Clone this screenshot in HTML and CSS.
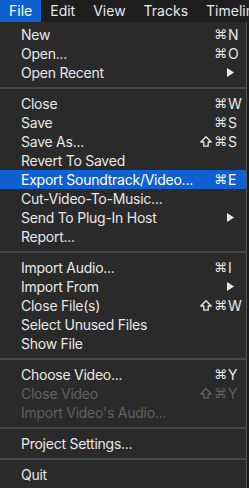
FILE: index.html
```html
<!DOCTYPE html>
<html lang="en">
<head>
  <meta charset="UTF-8">
  <title>File menu</title>
  <link rel="stylesheet" href="styles.css">
</head>
<body>

<div class="menubar">
  <span class="menu-title active">File</span>
  <span class="menu-title">Edit</span>
  <span class="menu-title">View</span>
  <span class="menu-title">Tracks</span>
  <span class="menu-title">Timeline</span>
</div>

<div class="menu">
  <div class="item"><span class="label">New</span><span class="mods">⌘</span><span class="key">N</span></div>
  <div class="item"><span class="label">Open...</span><span class="mods">⌘</span><span class="key">O</span></div>
  <div class="item"><span class="label">Open Recent</span><span class="key"><svg class="arrow" width="7" height="9"><polygon points="0,0 7,4.5 0,9"/></svg></span></div>

  <div class="sep"></div>

  <div class="item"><span class="label">Close</span><span class="mods">⌘</span><span class="key">W</span></div>
  <div class="item"><span class="label">Save</span><span class="mods">⌘</span><span class="key">S</span></div>
  <div class="item"><span class="label">Save As...</span><span class="mods"><svg class="shift" width="12" height="11"><polygon points="6,0.8 11.2,6 8.2,6 8.2,10.2 3.8,10.2 3.8,6 0.8,6"/></svg>⌘</span><span class="key">S</span></div>
  <div class="item"><span class="label">Revert To Saved</span></div>
  <div class="item selected"><span class="label">Export Soundtrack/Video...</span><span class="mods">⌘</span><span class="key">E</span></div>
  <div class="item"><span class="label">Cut-Video-To-Music...</span></div>
  <div class="item"><span class="label">Send To Plug-In Host</span><span class="key"><svg class="arrow" width="7" height="9"><polygon points="0,0 7,4.5 0,9"/></svg></span></div>
  <div class="item"><span class="label">Report...</span></div>

  <div class="sep"></div>

  <div class="item"><span class="label">Import Audio...</span><span class="mods">⌘</span><span class="key">I</span></div>
  <div class="item"><span class="label">Import From</span><span class="key"><svg class="arrow" width="7" height="9"><polygon points="0,0 7,4.5 0,9"/></svg></span></div>
  <div class="item"><span class="label">Close File(s)</span><span class="mods"><svg class="shift" width="12" height="11"><polygon points="6,0.8 11.2,6 8.2,6 8.2,10.2 3.8,10.2 3.8,6 0.8,6"/></svg>⌘</span><span class="key">W</span></div>
  <div class="item"><span class="label">Select Unused Files</span></div>
  <div class="item"><span class="label">Show File</span></div>

  <div class="sep"></div>

  <div class="item"><span class="label">Choose Video...</span><span class="mods">⌘</span><span class="key">Y</span></div>
  <div class="item disabled"><span class="label">Close Video</span><span class="mods"><svg class="shift" width="12" height="11"><polygon points="6,0.8 11.2,6 8.2,6 8.2,10.2 3.8,10.2 3.8,6 0.8,6"/></svg>⌘</span><span class="key">Y</span></div>
  <div class="item disabled"><span class="label">Import Video's Audio...</span></div>

  <div class="sep"></div>

  <div class="item"><span class="label">Project Settings...</span></div>

  <div class="sep"></div>

  <div class="item"><span class="label">Quit</span></div>
</div>

</body>
</html>
```

FILE: styles.css
```css
* {
  box-sizing: border-box;
}

body {
  margin: 0;
  background: #1c1c1c;
  font-family: Inter, "Liberation Sans", "DejaVu Sans", sans-serif;
  font-size: 14px;
  color: #e8e8e8;
  overflow: hidden;
}

.menubar {
  display: flex;
  height: 22px;
  line-height: 22px;
  background: #1e1e1e;
  white-space: nowrap;
  overflow: hidden;
}

.menu-title {
  padding: 0 9px;
}

.menu-title.active {
  background: #0f60d0;
  color: #fff;
}

.menu {
  width: 247px;
  padding: 3px 0 20px;
  background: #2a2a2a;
  border-right: 1px solid #555;
}

.item {
  display: flex;
  align-items: center;
  height: 19px;
  line-height: 19px;
  padding: 0 5px 0 21px;
  white-space: nowrap;
  letter-spacing: -0.25px;
}

.item .label {
  flex: 1;
}

.mods {
  display: flex;
  align-items: center;
  gap: 2px;
  font-family: "DejaVu Sans", sans-serif;
  font-size: 13px;
  letter-spacing: 0;
  margin-right: 1px;
}

.shift {
  fill: none;
  stroke: currentColor;
  stroke-width: 1.3;
  stroke-linejoin: round;
}

.key {
  width: 13px;
  display: flex;
  align-items: center;
  letter-spacing: 0;
}

.arrow {
  margin-left: -1px;
  fill: #e8e8e8;
}

.selected {
  background: #0f60d0;
  color: #fff;
}

.disabled {
  color: #606060;
}

.sep {
  height: 2px;
  margin: 5px 0;
  background: #474747;
}
```
